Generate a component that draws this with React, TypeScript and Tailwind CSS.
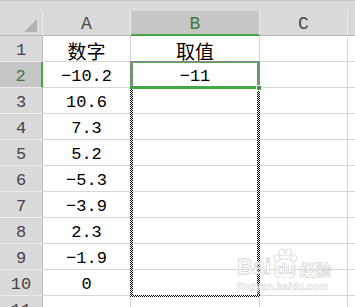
import React from "react";

const rows: { n: string; a: string; b: string; cjk?: boolean }[] = [
  { n: "1", a: "数字", b: "取值", cjk: true },
  { n: "2", a: "−10.2", b: "−11" },
  { n: "3", a: "10.6", b: "" },
  { n: "4", a: "7.3", b: "" },
  { n: "5", a: "5.2", b: "" },
  { n: "6", a: "−5.3", b: "" },
  { n: "7", a: "−3.9", b: "" },
  { n: "8", a: "2.3", b: "" },
  { n: "9", a: "−1.9", b: "" },
  { n: "10", a: "0", b: "" },
  { n: "11", a: "", b: "" },
];

const mono = "font-['Liberation_Mono','Noto_Sans_CJK_SC',monospace]";
const cjk = "font-['Noto_Sans_CJK_SC',sans-serif]";
const checker =
  "bg-[repeating-conic-gradient(#000_0%_25%,#fff_0%_50%)] bg-[length:2px_2px]";
const greenChecker =
  "bg-[repeating-conic-gradient(#4aa34a_0%_25%,#9c8a9c_0%_50%)] bg-[length:2px_2px]";

export default function App() {
  return (
    <div className="relative w-[355px] h-[307px] overflow-hidden bg-white">
      {/* top band */}
      <div className="h-[11px] bg-[#dadada] border-t border-[#c4c4c4]" />
      {/* column header row */}
      <div className="grid grid-cols-[43px_88px_129px_88px_1fr] h-[25px]">
        <div className="flex items-end justify-end pr-[5px] pb-[3px] bg-[#dadada] border-r border-b border-r-[#ececec] border-b-[#b4b4b4]">
          <svg width="13" height="13" viewBox="0 0 13 13">
            <polygon points="13,0 13,13 0,13" fill="#b3b3b3" />
          </svg>
        </div>
        <div className={`flex items-end justify-center bg-[#dadada] border-r border-b border-r-[#ececec] border-b-[#b4b4b4] text-[18px] leading-none pb-[2px] text-[#4a4a4a] ${mono}`}>
          A
        </div>
        <div className={`flex items-end justify-center bg-[#c6c6c6] border-r border-r-[#ececec] border-b-2 border-b-[#45a845] text-[18px] leading-none pb-[1px] text-[#3f7a3a] ${mono}`}>
          B
        </div>
        <div className={`flex items-end justify-center bg-[#dadada] border-r border-b border-r-[#ececec] border-b-[#b4b4b4] text-[18px] leading-none pb-[2px] text-[#4a4a4a] ${mono}`}>
          C
        </div>
        <div className="bg-[#dadada] border-b border-[#b4b4b4]" />
      </div>
      {/* data rows */}
      {rows.map((r) => {
        const active = r.n === "2";
        return (
          <div key={r.n} className="grid grid-cols-[43px_88px_129px_88px_1fr] h-[26px]">
            <div
              className={`flex items-end justify-center border-b border-b-[#ececec] text-[17px] leading-none pb-[2px] ${mono} ${
                active
                  ? "bg-[#c6c6c6] border-r-2 border-r-[#45a845] text-[#3f7a3a]"
                  : "bg-[#dadada] border-r border-r-[#bdbdbd] text-[#444]"
              }`}
            >
              {r.n}
            </div>
            <div
              className={`flex items-end justify-center border-r border-b border-[#d6d6d6] leading-none text-black ${
                r.cjk ? `text-[19px] pb-[1px] ${cjk}` : `text-[17px] pb-[2px] ${mono}`
              }`}
            >
              {r.a}
            </div>
            <div
              className={`flex items-end justify-center border-r border-b border-[#d6d6d6] leading-none text-black ${
                r.cjk ? `text-[19px] pb-[1px] ${cjk}` : `text-[17px] pb-[2px] ${mono}`
              }`}
            >
              {r.b}
            </div>
            <div className="border-r border-b border-[#d6d6d6]" />
            <div className="border-b border-[#d6d6d6]" />
          </div>
        );
      })}

      {/* copy marquee B2:B10 */}
      <div className={`absolute left-[130px] top-[89px] w-[3px] h-[208px] ${checker}`} />
      <div className={`absolute left-[257px] top-[89px] w-[3px] h-[208px] ${checker}`} />
      <div className={`absolute left-[130px] top-[295px] w-[130px] h-[2px] ${checker}`} />

      {/* selection B2 */}
      <div className={`absolute left-[130px] top-[61px] w-[130px] h-[2px] ${greenChecker}`} />
      <div className={`absolute left-[130px] top-[61px] w-[3px] h-[25px] ${greenChecker}`} />
      <div className={`absolute left-[257px] top-[61px] w-[3px] h-[25px] ${greenChecker}`} />
      <div className="absolute left-[130px] top-[86px] w-[130px] h-[3px] bg-[#45a845]" />
      <div className="absolute left-[256px] top-[85px] w-[6px] h-[6px] bg-[#3f9a3f] border border-white" />

      {/* watermark */}
      <div className="absolute left-[237px] top-[248px] flex flex-col items-start opacity-90">
        <div className="flex items-end">
          <span className="font-['Liberation_Sans',sans-serif] font-bold text-[22px] leading-none text-white [-webkit-text-stroke:0.8px_#d2d2d2]">
            Bai
          </span>
          <div className="relative w-[26px] h-[30px] mx-[1px]">
            <svg width="26" height="30" viewBox="0 0 26 30" className="absolute left-0 top-0">
              <g fill="#fff" stroke="#d2d2d2" strokeWidth="0.9">
                <ellipse cx="5" cy="10" rx="3" ry="3.6" />
                <ellipse cx="10" cy="4.5" rx="3" ry="3.6" />
                <ellipse cx="16.5" cy="4.5" rx="3" ry="3.6" />
                <ellipse cx="21.5" cy="10" rx="3" ry="3.6" />
                <path d="M3 18 C3 13 8 11 13 11 C18 11 23 13 23 18 L23 25 C23 28 21 30 18 30 L8 30 C5 30 3 28 3 25 Z" />
              </g>
            </svg>
            <span className="absolute left-[4px] bottom-[2px] font-['Liberation_Sans',sans-serif] font-bold text-[15px] leading-none text-white [-webkit-text-stroke:0.7px_#d2d2d2]">
              du
            </span>
          </div>
          <span className="font-['Noto_Sans_CJK_SC',sans-serif] font-bold text-[16px] leading-none text-white [-webkit-text-stroke:0.7px_#d2d2d2] mb-[1px]">
            经验
          </span>
        </div>
        <span className="mt-[4px] font-['Liberation_Sans',sans-serif] font-bold text-[10px] leading-none tracking-[0.2px] text-white [-webkit-text-stroke:0.5px_#d6d6d6]">
          jingyan.baidu.com
        </span>
      </div>
    </div>
  );
}
